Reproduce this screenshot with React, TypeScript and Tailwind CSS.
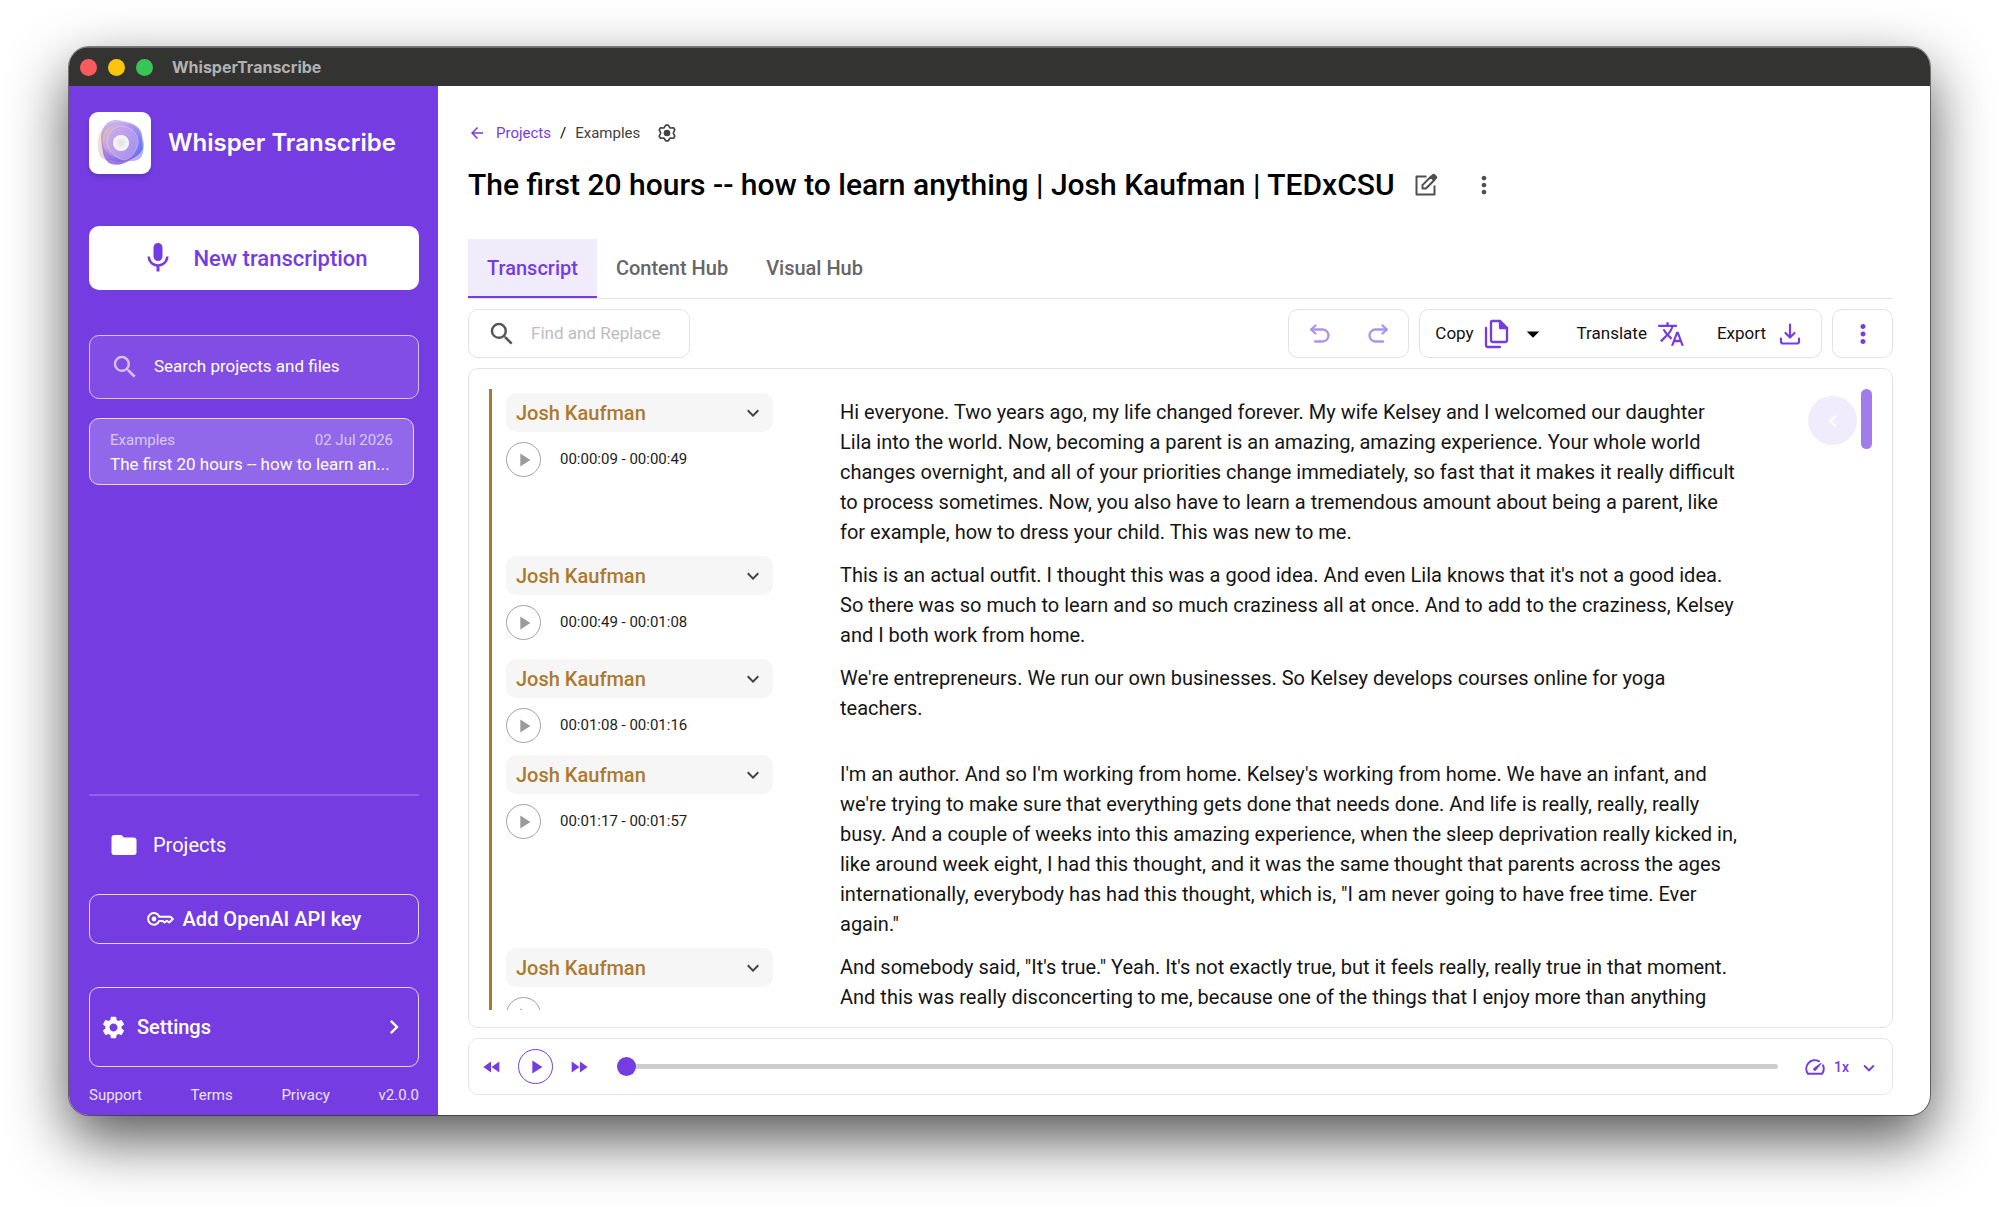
import { useState } from "react"
import type { ReactNode } from "react"
import {
  MdArrowBack,
  MdArrowDropDown,
  MdChevronLeft,
  MdChevronRight,
  MdFastForward,
  MdFastRewind,
  MdFolder,
  MdKeyboardArrowDown,
  MdMic,
  MdMoreVert,
  MdPlayArrow,
  MdSearch,
  MdSettings,
  MdTranslate,
} from "react-icons/md"

const segments = [
  {
    time: "00:00:09 - 00:00:49",
    text: "Hi everyone. Two years ago, my life changed forever. My wife Kelsey and I welcomed our daughter Lila into the world. Now, becoming a parent is an amazing, amazing experience. Your whole world changes overnight, and all of your priorities change immediately, so fast that it makes it really difficult to process sometimes. Now, you also have to learn a tremendous amount about being a parent, like for example, how to dress your child. This was new to me.",
  },
  {
    time: "00:00:49 - 00:01:08",
    text: "This is an actual outfit. I thought this was a good idea. And even Lila knows that it's not a good idea. So there was so much to learn and so much craziness all at once. And to add to the craziness, Kelsey and I both work from home.",
  },
  {
    time: "00:01:08 - 00:01:16",
    text: "We're entrepreneurs. We run our own businesses. So Kelsey develops courses online for yoga teachers.",
  },
  {
    time: "00:01:17 - 00:01:57",
    text: "I'm an author. And so I'm working from home. Kelsey's working from home. We have an infant, and we're trying to make sure that everything gets done that needs done. And life is really, really, really busy. And a couple of weeks into this amazing experience, when the sleep deprivation really kicked in, like around week eight, I had this thought, and it was the same thought that parents across the ages internationally, everybody has had this thought, which is, \"I am never going to have free time. Ever again.\"",
  },
  {
    time: "",
    text: "And somebody said, \"It's true.\" Yeah. It's not exactly true, but it feels really, really true in that moment. And this was really disconcerting to me, because one of the things that I enjoy more than anything",
  },
]

const tabs = ["Transcript", "Content Hub", "Visual Hub"]

function Logo() {
  return (
    <svg viewBox="0 0 62 62" className="w-[62px] h-[62px] rounded-[9px] bg-white shadow-md" aria-hidden="true">
      <defs>
        <linearGradient id="warm" x1="0" y1="0.2" x2="1" y2="0.6">
          <stop offset="0" stopColor="#f5cfa6" />
          <stop offset="0.45" stopColor="#cfaee6" />
          <stop offset="1" stopColor="#8a7cf0" />
        </linearGradient>
        <linearGradient id="violet" x1="0.3" y1="0" x2="0.5" y2="1">
          <stop offset="0" stopColor="#b9a6f3" />
          <stop offset="1" stopColor="#6a3bd6" />
        </linearGradient>
        <linearGradient id="blue" x1="0" y1="0.2" x2="1" y2="0.6">
          <stop offset="0" stopColor="#ecc5b4" />
          <stop offset="0.5" stopColor="#b597ee" />
          <stop offset="1" stopColor="#5b78f2" />
        </linearGradient>
        <radialGradient id="core">
          <stop offset="0" stopColor="#dedee4" />
          <stop offset="1" stopColor="#fbfaff" />
        </radialGradient>
      </defs>
      <path d="M10 24c2-7 8-13 15-14 9 0 17 0 24 7 5 6 7 14 5 23-1 8-8 10-15 9-8 1-11 2-17-1-5 1-11-1-12-7-1-6-2-11 0-17z" fill="url(#warm)" opacity="0.6" />
      <path d="M15 15c4-7 11-8 18-6 8 1 16 4 19 10 2 6 0 11 1 17-1 6-6 9-12 12-7 5-15 6-21 3-6-5-6-11-7-17s-2-13 2-19z" fill="url(#violet)" opacity="0.7" />
      <path d="M16 19c4-6 12-7 20-7 8 0 14 3 15 11 2 6 5 11 2 16-4 5-9 5-16 7-8 1-15-1-20-7-4-6-5-14-1-20z" fill="url(#blue)" opacity="0.7" />
      <path d="M33 14c8 1 16 7 16 15 0 8-6 18-14 19-7-1-17-10-17-18 0-8 7-16 15-16z" fill="#c4a7f0" opacity="0.6" stroke="#eee5fc" strokeWidth="0.7" />
      <circle cx="32" cy="31" r="8" fill="url(#core)" />
    </svg>
  )
}

function GearIcon() {
  return (
    <svg viewBox="0 0 24 24" className="w-5 h-5" fill="none" stroke="currentColor" strokeWidth="2" strokeLinejoin="round" aria-hidden="true">
      <path d="M10.500 2.600h3l2.250 3.400 4.100-.3 1.500 2.600L19.500 12l1.850 3.700-1.500 2.600-4.100-.3-2.250 3.400h-3L8.250 18l-4.100.3-1.500-2.600L4.500 12 2.650 8.300l1.500-2.600 4.100.3z" />
      <circle cx="12" cy="12" r="4" fill="currentColor" stroke="none" />
    </svg>
  )
}

function EditIcon() {
  return (
    <svg viewBox="0 0 24 24" className="w-6 h-6" fill="none" stroke="currentColor" strokeWidth="2" strokeLinejoin="round" aria-hidden="true">
      <path d="M12.500 3.500H2.500v18h18v-9" />
      <path d="M8.500 15.500v-3.400l8.300-8.300 3.400 3.400-8.300 8.300z" />
      <path d="M17.200 3.800l1.700-1.700c.5-.5 1-.5 1.500 0l1.500 1.500c.5.500.5 1 0 1.500l-1.700 1.700z" fill="currentColor" />
    </svg>
  )
}

function KeyIcon() {
  return (
    <svg viewBox="0 0 27 14" className="w-[27px] h-3.5" fill="none" stroke="currentColor" strokeWidth="2" strokeLinejoin="round" aria-hidden="true">
      <path d="M12.300 4.800H23.500l2.300 2.200-3.600 3.500-2.400-1.700-2.300 1.700-2-1.600h-3.200A5.800 5.800 0 1 1 12.300 4.800z" />
      <circle cx="7" cy="7" r="2.400" fill="currentColor" stroke="none" />
    </svg>
  )
}

function UndoIcon({ className = "" }) {
  return (
    <svg viewBox="0 0 24 24" className={`w-6 h-6 ${className}`} fill="none" stroke="currentColor" strokeWidth="2.300" strokeLinecap="round" strokeLinejoin="round" aria-hidden="true">
      <path d="M7.500 3.500l-4.500 4 4.500 4" />
      <path d="M3.500 7.500h11a5.900 5.900 0 0 1 0 12H7" />
    </svg>
  )
}

function CopyIcon() {
  return (
    <svg viewBox="0 0 28 32" className="w-7 h-8" fill="none" stroke="currentColor" strokeWidth="2.300" strokeLinecap="round" strokeLinejoin="round" aria-hidden="true">
      <path d="M10 3h8l7 7v12a2 2 0 0 1-2 2H11a2 2 0 0 1-2-2V4a1 1 0 0 1 1-1z" />
      <path d="M18 3v7h7z" fill="currentColor" />
      <path d="M4 10v17a2 2 0 0 0 2 2h12" />
    </svg>
  )
}

function ExportIcon() {
  return (
    <svg viewBox="0 0 24 24" className="w-6 h-6" fill="none" stroke="currentColor" strokeWidth="2.200" strokeLinecap="round" strokeLinejoin="round" aria-hidden="true">
      <path d="M12 2.500v12.500M7.500 11l4.500 4.500 4.500-4.500" />
      <path d="M3 16.500v3a2 2 0 0 0 2 2h14a2 2 0 0 0 2-2v-3" />
    </svg>
  )
}

function SpeedIcon() {
  return (
    <svg viewBox="0 0 22 20" className="w-[22px] h-5" fill="none" stroke="currentColor" strokeWidth="2" strokeLinecap="round" strokeLinejoin="round" aria-hidden="true">
      <path d="M15 4.300A8.500 8.500 0 0 0 4 16.800h14a8.500 8.500 0 0 0 1-8.500" />
      <path d="M17 6.500l-5 6.300a1.300 1.300 0 1 1-1.800-1.800z" fill="currentColor" strokeWidth="1" />
    </svg>
  )
}

function ToolbarBox({ children, className = "" }: { children: ReactNode; className?: string }) {
  return (
    <div className={`h-[49px] flex items-center border border-[#e3e3e3] rounded-[10px] ${className}`}>
      {children}
    </div>
  )
}

function Sidebar() {
  return (
    <aside className="w-[369px] shrink-0 flex flex-col bg-[#743ce1] text-white pl-5 pr-[19px] pt-[26px] pb-2">
      <div className="flex items-center gap-[17px]">
        <Logo />
        <span className="text-2xl font-semibold font-['Inter',sans-serif]">Whisper Transcribe</span>
      </div>

      <button className="mt-[52px] h-16 shrink-0 flex items-center justify-center gap-[17px] rounded-[10px] bg-white text-[#743ce1] text-[22px] font-medium">
        <MdMic className="w-9 h-9" />
        New transcription
      </button>

      <label className="mt-[45px] h-16 shrink-0 flex items-center gap-3.5 px-5 rounded-[10px] border border-[#d5c2f7] bg-[#814de4]">
        <MdSearch className="w-[30px] h-[30px] shrink-0 text-[#d5c2f7]" />
        <input
          type="text"
          aria-label="Search projects and files"
          placeholder="Search projects and files"
          className="w-full bg-transparent text-[17px] outline-none placeholder:text-white"
        />
      </label>

      <a href="#example" className="mt-[19px] mr-[5px] h-[67px] shrink-0 flex flex-col justify-center rounded-[10px] border border-[#e3d7fa] bg-[#9168ea] px-5">
        <span className="flex justify-between text-[15px] leading-6 text-[#d9c9f8]">
          <span>Examples</span>
          <span>02 Jul 2026</span>
        </span>
        <span className="whitespace-nowrap text-[17px] leading-6">The first 20 hours -- how to learn an...</span>
      </a>

      <div className="mt-auto border-t-2 border-[#8f63e8]" />
      <a href="#projects" className="mt-[33px] flex items-center gap-3.5 px-5 text-xl leading-8">
        <MdFolder className="w-[30px] h-[30px]" />
        Projects
      </a>
      <button className="mt-[33px] h-[50px] shrink-0 flex items-center justify-center gap-[9px] rounded-[10px] border border-[#e3d7fa] text-xl font-medium">
        <KeyIcon />
        Add OpenAI API key
      </button>
      <button className="mt-[43px] h-20 shrink-0 flex items-center gap-2.5 px-2.5 rounded-[10px] border border-[#e3d7fa] text-xl font-medium">
        <MdSettings className="w-[27px] h-[27px]" />
        Settings
        <MdChevronRight className="ml-auto w-7 h-7" />
      </button>
      <div className="mt-4 flex justify-between text-[15px] leading-6 text-[#ece4fc]">
        <a href="#support">Support</a>
        <a href="#terms">Terms</a>
        <a href="#privacy">Privacy</a>
        <span>v2.0.0</span>
      </div>
    </aside>
  )
}

function Segment({ time, text }: { time: string; text: string }) {
  return (
    <div className="flex min-h-[87px] shrink-0">
      <div className="w-[267px] shrink-0">
        <div className="relative">
          <select
            aria-label="Speaker"
            className="w-full h-[39px] appearance-none rounded-[10px] bg-[#f6f6f6] px-2.5 text-xl font-medium text-[#ac7a2d] outline-none"
          >
            <option>Josh Kaufman</option>
          </select>
          <MdKeyboardArrowDown className="absolute right-2 top-2 w-6 h-6 text-[#444444] pointer-events-none" />
        </div>
        <div className="mt-2.5 flex items-center gap-[19px]">
          <button aria-label="Play segment" className="w-[35px] h-[35px] flex items-center justify-center rounded-full border border-[#a3a3a3] text-[#9b9b9b]">
            <MdPlayArrow className="w-[22px] h-[22px]" />
          </button>
          <span className="text-[15px] text-[#1c1c1c]">{time}</span>
        </div>
      </div>
      <p className="ml-[67px] mr-[124px] pt-1 flex-1 text-xl leading-[30px] text-[#151515]">{text}</p>
    </div>
  )
}

function Player() {
  const [position, setPosition] = useState(0)

  return (
    <div className="mt-2.5 h-[57px] shrink-0 flex items-center border border-[#e6e6e6] rounded-[10px] px-3 text-[#743ce1]">
      <button aria-label="Rewind"><MdFastRewind className="w-[22px] h-[22px]" /></button>
      <button aria-label="Play" className="ml-[15px] w-[35px] h-[35px] flex items-center justify-center rounded-full border border-[#743ce1]">
        <MdPlayArrow className="w-[22px] h-[22px]" />
      </button>
      <button aria-label="Fast forward" className="ml-[15px]"><MdFastForward className="w-[22px] h-[22px]" /></button>
      <input
        type="range"
        aria-label="Playback position"
        value={position}
        onChange={(e) => setPosition(Number(e.target.value))}
        className="ml-[27px] mr-[26px] flex-1 h-[5px] appearance-none rounded-full bg-[#cdcdcd] outline-none [&::-webkit-slider-thumb]:appearance-none [&::-webkit-slider-thumb]:w-[19px] [&::-webkit-slider-thumb]:h-[19px] [&::-webkit-slider-thumb]:rounded-full [&::-webkit-slider-thumb]:bg-[#743ce1]"
      />
      <label className="relative flex items-center gap-2">
        <SpeedIcon />
        <select aria-label="Playback speed" className="w-[46px] appearance-none bg-transparent text-sm font-medium outline-none">
          <option>1x</option>
        </select>
        <MdKeyboardArrowDown className="absolute right-0 top-0 w-[22px] h-[22px] pointer-events-none" />
      </label>
    </div>
  )
}

export default function App() {
  const [tab, setTab] = useState("Transcript")

  return (
    <div className="h-screen bg-white pt-[47px] pb-[92px] px-[69px] font-['Roboto',sans-serif]">
      <div className="h-full flex flex-col overflow-hidden rounded-[20px] bg-white shadow-[0_0_0_1px_rgba(0,0,0,0.45),0_24px_60px_rgba(0,0,0,0.68)]">
        <header className="h-[39px] shrink-0 flex items-center gap-[11px] pl-[11px] bg-[#333432] border-t border-[#6b6b6b]">
          <span className="w-[17px] h-[17px] rounded-full bg-[#fb5b5e]" />
          <span className="w-[17px] h-[17px] rounded-full bg-[#f9c60d]" />
          <span className="w-[17px] h-[17px] rounded-full bg-[#37c558]" />
          <span className="ml-2 text-base font-bold text-[#b1b1b0] font-['Inter',sans-serif]">WhisperTranscribe</span>
        </header>

        <div className="flex-1 min-h-0 flex">
          <Sidebar />

          <main className="flex-1 min-w-0 flex flex-col pl-[30px] pr-[37px] pt-[35px] pb-5">
            <nav aria-label="Breadcrumb" className="flex items-center text-[15px] leading-6">
              <a href="#projects" className="flex items-center gap-2.5 text-[#743ce1]">
                <MdArrowBack className="w-[18px] h-[18px]" />
                Projects
              </a>
              <span className="mx-[9px]">/</span>
              <span className="text-[#3f3f3f]">Examples</span>
              <button aria-label="Project settings" className="ml-[17px] text-[#444444]"><GearIcon /></button>
            </nav>

            <div className="mt-5 flex items-center">
              <h1 className="text-3xl leading-10 font-medium text-black">
                The first 20 hours -- how to learn anything | Josh Kaufman | TEDxCSU
              </h1>
              <button aria-label="Edit title" className="ml-[19px] text-[#4f4f4f]"><EditIcon /></button>
              <button aria-label="More options" className="ml-8 text-[#4f4f4f]"><MdMoreVert className="w-7 h-7" /></button>
            </div>

            <div role="tablist" className="mt-[34px] flex border-b border-[#e3e3e3]">
              {tabs.map((name) => (
                <button
                  key={name}
                  role="tab"
                  aria-selected={tab === name}
                  onClick={() => setTab(name)}
                  className={`h-[59px] px-[19px] text-xl font-medium border-b-2 ${
                    tab === name
                      ? "bg-[#f1ecfc] text-[#743ce1] border-[#743ce1]"
                      : "text-[#666666] border-transparent"
                  }`}
                >
                  {name}
                </button>
              ))}
            </div>

            <div className="mt-2.5 flex items-center gap-2.5">
              <ToolbarBox className="w-[222px] mr-auto pl-[18px]">
                <MdSearch className="w-[30px] h-[30px] shrink-0 text-[#555555]" />
                <input
                  type="text"
                  aria-label="Find and Replace"
                  placeholder="Find and Replace"
                  className="ml-3.5 w-full min-w-0 bg-transparent text-[17px] outline-none placeholder:text-[#bdbdbd]"
                />
              </ToolbarBox>
              <ToolbarBox className="w-[121px] justify-center gap-[34px] text-[#af91ee]">
                <button aria-label="Undo"><UndoIcon /></button>
                <button aria-label="Redo"><UndoIcon className="-scale-x-100" /></button>
              </ToolbarBox>
              <ToolbarBox className="pl-[15px] pr-[19px] text-[17px] text-[#111111]">
                <button className="flex items-center gap-2">
                  Copy
                  <span className="text-[#743ce1]"><CopyIcon /></span>
                  <MdArrowDropDown className="w-[30px] h-[30px] text-black" />
                </button>
                <button className="ml-[29px] flex items-center gap-2.5">
                  Translate
                  <MdTranslate className="w-7 h-7 text-[#743ce1]" />
                </button>
                <button className="ml-8 flex items-center gap-3">
                  Export
                  <span className="text-[#743ce1]"><ExportIcon /></span>
                </button>
              </ToolbarBox>
              <ToolbarBox className="w-[61px] justify-center">
                <button aria-label="More tools"><MdMoreVert className="w-[30px] h-[30px] text-[#743ce1]" /></button>
              </ToolbarBox>
            </div>

            <section className="relative mt-2.5 flex-1 min-h-0 flex border border-[#e3e3e3] rounded-[10px] px-5 pt-5 pb-[17px]">
              <div className="flex-1 min-w-0 flex flex-col gap-[9px] overflow-hidden border-l-[3px] border-[#ac7a2d] pl-3.5 pt-1">
                {segments.map((segment) => (
                  <Segment key={segment.text} time={segment.time} text={segment.text} />
                ))}
              </div>
              <div className="w-[11px] h-[60px] rounded-full bg-[#a27bed]" />
              <button aria-label="Open panel" className="absolute right-[35px] top-[27px] w-[49px] h-[49px] flex items-center justify-center rounded-full bg-[#f1ecfc] text-white">
                <MdChevronLeft className="w-6 h-6" />
              </button>
            </section>

            <Player />
          </main>
        </div>
      </div>
    </div>
  )
}
